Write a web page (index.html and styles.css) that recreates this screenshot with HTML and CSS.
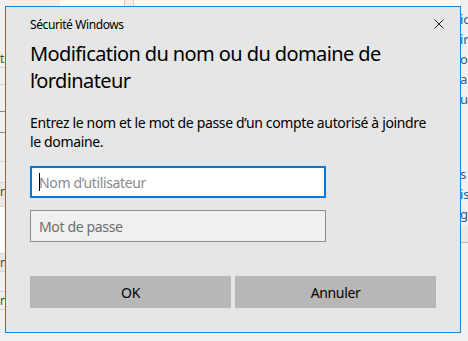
FILE: index.html
```html
<!DOCTYPE html>
<html lang="fr">
  <head>
    <meta charset="UTF-8" />
    <meta name="viewport" content="width=device-width, initial-scale=1.0" />
    <title>Sécurité Windows</title>
    <link rel="stylesheet" href="styles.css">
  </head>
  <body>
    <!-- window behind the dialog, mostly hidden -->
    <div class="backdrop">
      <div class="side-list">
        <div class="row r18"><span>tr</span></div>
        <div class="row r17"></div>
        <div class="row r27 dark"></div>
        <div class="row r21 dark"></div>
        <div class="row r29"></div>
        <div class="row r21"></div>
        <div class="row r24 shade"><span>n</span></div>
        <div class="row r47 white"></div>
        <div class="row r18 shade"><span>n</span></div>
        <div class="row r20"></div>
        <div class="row r18"><span>n</span></div>
      </div>
      <div class="middle">
        <div class="top-strip">
          <div class="tab"></div>
          <div class="tab-gap"></div>
          <div class="tab-rest"></div>
        </div>
      </div>
      <div class="side-text">
        <span>io</span>
        <span>ir</span>
        <span>o</span>
        <span>ai</span>
        <span>ui</span>
        <span class="spacer"></span>
        <span>s</span>
        <span>is</span>
        <span>gu</span>
        <div class="band"></div>
      </div>
    </div>

    <div class="dialog" role="dialog">
      <div class="titlebar">
        <span class="app-name">Sécurité Windows</span>
        <button class="close" aria-label="Fermer">
          <svg width="10" height="10" viewBox="0 0 10 10">
            <path d="M0.5 0.5 L9.5 9.5 M9.5 0.5 L0.5 9.5" stroke="#1a1a1a" stroke-width="1" fill="none" />
          </svg>
        </button>
      </div>

      <h1>Modification du nom ou du domaine de l’ordinateur</h1>
      <p class="intro">Entrez le nom et le mot de passe d’un compte autorisé à joindre le domaine.</p>

      <div class="fields">
        <label class="field focused">
          <span class="caret"></span>
          <input type="text" placeholder="Nom d’utilisateur" />
        </label>
        <label class="field">
          <input type="password" placeholder="Mot de passe" />
        </label>
      </div>

      <div class="actions">
        <button class="btn">OK</button>
        <button class="btn">Annuler</button>
      </div>
    </div>
  </body>
</html>
```

FILE: styles.css
```css
* {
  box-sizing: border-box;
}

body {
  margin: 0;
  padding: 0;
  width: 468px;
  height: 341px;
  overflow: hidden;
  position: relative;
  background: #f0f0f0;
  font-family: "Noto Sans", "Open Sans", sans-serif;
  color: #000;
}

/* Background window */
.backdrop {
  display: flex;
  height: 100%;
}

.side-list {
  width: 5px;
  padding-top: 50px;
  display: flex;
  flex-direction: column;
}

.side-list .row {
  flex-shrink: 0;
  border-bottom: 1px solid #d4d4d4;
  font-size: 12px;
  line-height: 18px;
  color: #5a4a20;
  overflow: hidden;
}

.r17 { height: 17px; }
.r18 { height: 18px; }
.r20 { height: 20px; }
.r21 { height: 21px; }
.r24 { height: 24px; }
.r27 { height: 27px; }
.r29 { height: 29px; }
.r47 { height: 47px; }

.side-list .row.dark {
  border-bottom-color: #8a8a8a;
}

.side-list .row.shade {
  background: #e8e8e8;
}

.side-list .row.white {
  background: #fff;
}

.middle {
  flex: 1;
}

.top-strip {
  display: flex;
  height: 6px;
  padding-left: 55px;
}

.top-strip .tab {
  width: 65px;
  background: #fff;
  border-right: 1px solid #d0d0d0;
}

.top-strip .tab-gap {
  width: 9px;
  border-right: 1px solid #d0d0d0;
}

.top-strip .tab-rest {
  flex: 1;
  background: #fafafa;
}

.side-text {
  width: 8px;
  padding-top: 9px;
  display: flex;
  flex-direction: column;
  overflow: hidden;
  font-size: 13px;
  line-height: 20px;
  color: #2f5d8c;
  white-space: nowrap;
}

.side-text .spacer {
  height: 55px;
}

.side-text .band {
  height: 17px;
  margin-top: 2px;
  background: #e9e9e9;
  border-bottom: 1px solid #b8b8b8;
}

/* Dialog */
.dialog {
  position: absolute;
  left: 5px;
  top: 6px;
  width: 456px;
  height: 327px;
  background: #e6e6e6;
  border: 1px solid #1883d7;
  padding: 0 24px 24px;
  display: flex;
  flex-direction: column;
}

.titlebar {
  display: flex;
  align-items: center;
  justify-content: space-between;
  height: 28px;
  margin-top: 3px;
}

.app-name {
  font-size: 12px;
  letter-spacing: -0.4px;
}

.close {
  border: none;
  background: none;
  padding: 0;
  margin-right: -8px;
  width: 10px;
  height: 10px;
  display: flex;
}

h1 {
  margin: 2px 0 0;
  font-size: 20px;
  font-weight: normal;
  line-height: 27px;
  letter-spacing: -0.6px;
}

.intro {
  margin: 19px 0 0;
  font-size: 14px;
  line-height: 19px;
  letter-spacing: -0.35px;
}

.fields {
  margin-top: 15px;
  display: flex;
  flex-direction: column;
  gap: 12px;
}

.field {
  position: relative;
  display: block;
  width: 296px;
}

.field input {
  display: block;
  width: 100%;
  height: 32px;
  padding: 0 8px;
  border: 1px solid #8c8c8c;
  background: #f0f0f0;
  font-family: inherit;
  font-size: 14px;
  letter-spacing: -0.35px;
  color: #000;
  outline: none;
}

.field input::placeholder {
  color: #6d6d6d;
}

.field.focused input {
  border: 2px solid #0078d7;
  background: #fff;
  padding: 0 7px;
}

.field.focused input::placeholder {
  color: #8a8a8a;
}

.caret {
  position: absolute;
  left: 9px;
  top: 7px;
  width: 1px;
  height: 18px;
  background: #000;
}

.actions {
  margin-top: auto;
  display: grid;
  grid-template-columns: 1fr 1fr;
  gap: 4px;
}

.btn {
  height: 32px;
  border: none;
  background: #b7b7b7;
  font-family: inherit;
  font-size: 14px;
  letter-spacing: -0.35px;
  color: #000;
}
```
